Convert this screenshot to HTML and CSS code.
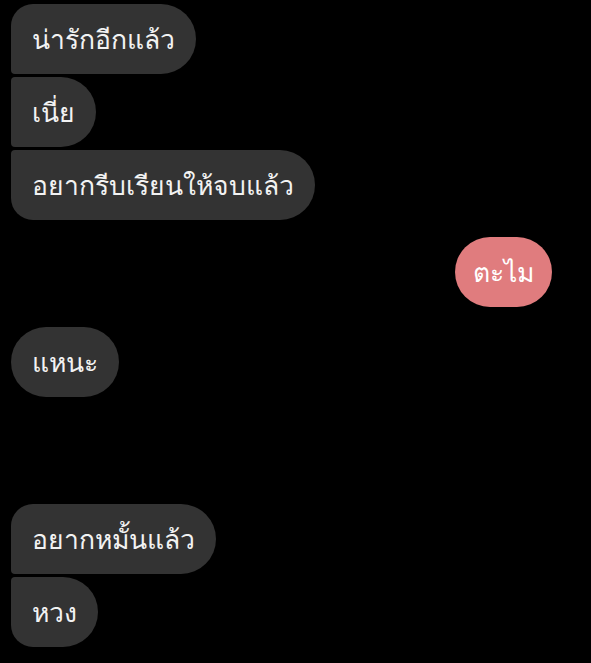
FILE: index.html
```html
<!DOCTYPE html>
<html lang="th">
<head>
    <meta charset="UTF-8">
    <meta name="viewport" content="width=device-width, initial-scale=1.0">
    <title>Chat</title>
    <link rel="stylesheet" href="styles.css">
</head>
<body>

    <div class="chat">
        <div class="group">
            <div class="bubble in first">น่ารักอีกแล้ว</div>
            <div class="bubble in middle">เนี่ย</div>
            <div class="bubble in last">อยากรีบเรียนให้จบแล้ว</div>
        </div>

        <div class="group out-group">
            <div class="bubble out">ตะไม</div>
        </div>

        <div class="group">
            <div class="bubble in">แหนะ</div>
        </div>

        <div class="group late">
            <div class="bubble in first">อยากหมั้นแล้ว</div>
            <div class="bubble in last">หวง</div>
        </div>
    </div>

</body>
</html>
```

FILE: styles.css
```css
/* Global */
body {
    margin: 0;
    background: #000;
    font-family: "Noto Sans", "DejaVu Sans", sans-serif;
    color: #f2f2f2;
}

.chat {
    display: flex;
    flex-direction: column;
    gap: 17px;
    padding: 4px 39px 0 11px;
}

.group {
    display: flex;
    flex-direction: column;
    align-items: flex-start;
    gap: 3px;
}

.out-group {
    align-items: flex-end;
    margin-bottom: 3px;
}

.late {
    margin-top: 90px;
}

.bubble {
    font-size: 26.5px;
    line-height: 36px;
    padding: 17px 21px;
    border-radius: 35px;
    background: #333333;
}

.bubble.in.first { border-radius: 22px 35px 35px 4px; }
.bubble.in.middle { border-radius: 4px 35px 35px 4px; }
.bubble.in.last { border-radius: 4px 35px 35px 22px; }

.bubble.out {
    padding: 17px 18px;
    background: #e07c7e;
    color: #fff;
}
```
